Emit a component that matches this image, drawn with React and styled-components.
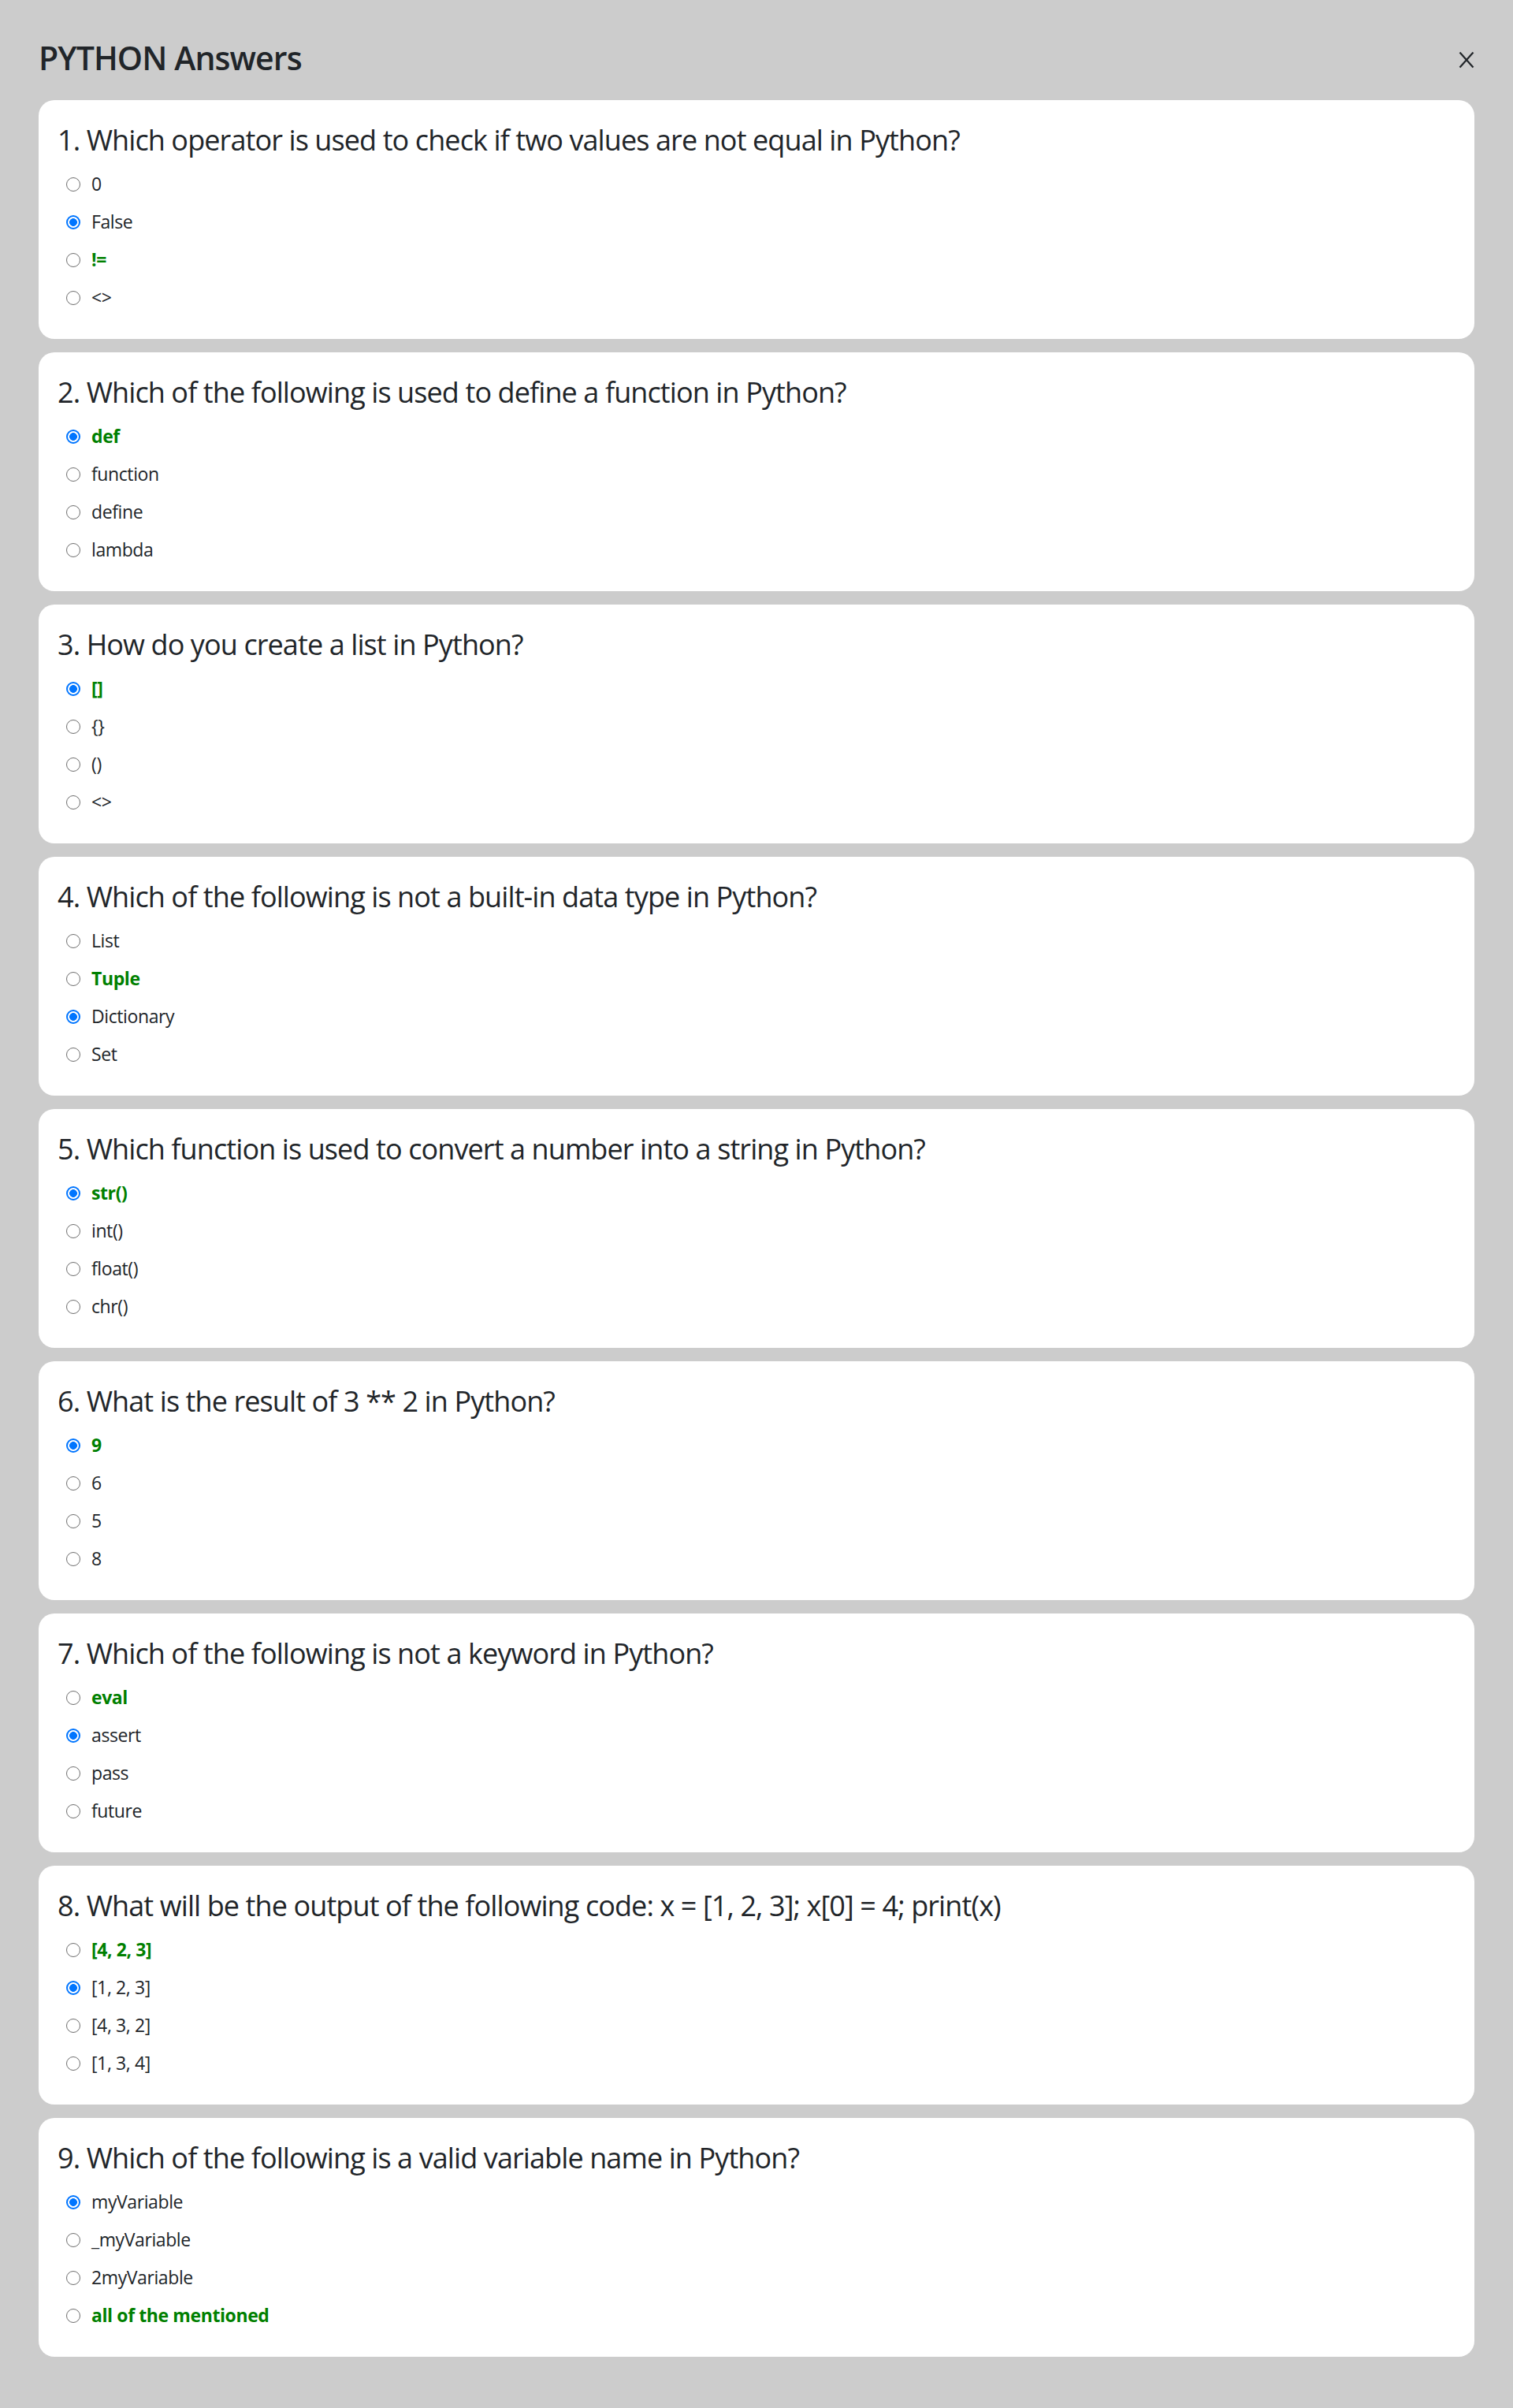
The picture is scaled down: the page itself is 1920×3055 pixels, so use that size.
import React from "react";
import styled, { createGlobalStyle } from "styled-components";

const GlobalStyle = createGlobalStyle`
  * { box-sizing: border-box; }
  html, body { margin: 0; padding: 0; }
  body {
    background: #cccccc;
    font-family: "Open Sans", "Noto Sans", Arial, sans-serif;
    color: #212529;
  }
`;

const Page = styled.div`
  min-height: 3055px;
  padding: 49px 49px 65px;
  background: #cccccc;
`;

const Header = styled.header`
  display: flex;
  align-items: center;
  justify-content: space-between;
  margin-bottom: 29px;
`;

const Title = styled.h1`
  margin: 0;
  font-size: 41px;
  line-height: 1.2;
  font-weight: 600;
  letter-spacing: -0.9px;
  color: #212529;
`;

const CloseButton = styled.button`
  display: flex;
  align-items: center;
  justify-content: center;
  width: 20px;
  height: 28px;
  padding: 0;
  margin: 4px 0 0;
  border: none;
  background: transparent;
  color: #212529;
  cursor: pointer;
`;

const List = styled.div`
  display: flex;
  flex-direction: column;
  gap: 17px;
`;

const Card = styled.section`
  background: #ffffff;
  border-radius: 20px;
  padding: 29px 24px 28px;
  height: 303px;
`;

const Question = styled.h2`
  margin: 0 0 11px;
  font-size: 36px;
  line-height: 43px;
  font-weight: 400;
  letter-spacing: -0.9px;
  color: #212529;
`;

const Options = styled.div`
  display: flex;
  flex-direction: column;
  padding-left: 11px;
`;

const OptionRow = styled.label`
  display: flex;
  align-items: center;
  gap: 14px;
  height: 48px;
`;

const Radio = styled.input.attrs({ type: "radio" })`
  appearance: none;
  -webkit-appearance: none;
  margin: 0;
  width: 18px;
  height: 18px;
  flex: none;
  border-radius: 50%;
  border: 1.8px solid #6f6f6f;
  background: #ffffff;

  &:checked {
    border: 2px solid #0075ff;
    background: radial-gradient(circle, #0075ff 0 4.6px, #ffffff 5.2px);
  }
`;

const OptionText = styled.span`
  font-size: 23px;
  line-height: 1.2;
  letter-spacing: -0.4px;
  color: ${(p) => (p.$correct ? "#008000" : "#212529")};
  font-weight: ${(p) => (p.$correct ? 700 : 400)};
`;

const questions = [
  {
    q: "1. Which operator is used to check if two values are not equal in Python?",
    options: ["0", "False", "!=", "<>"],
    selected: 1,
    correct: 2,
  },
  {
    q: "2. Which of the following is used to define a function in Python?",
    options: ["def", "function", "define", "lambda"],
    selected: 0,
    correct: 0,
  },
  {
    q: "3. How do you create a list in Python?",
    options: ["[]", "{}", "()", "<>"],
    selected: 0,
    correct: 0,
  },
  {
    q: "4. Which of the following is not a built-in data type in Python?",
    options: ["List", "Tuple", "Dictionary", "Set"],
    selected: 2,
    correct: 1,
  },
  {
    q: "5. Which function is used to convert a number into a string in Python?",
    options: ["str()", "int()", "float()", "chr()"],
    selected: 0,
    correct: 0,
  },
  {
    q: "6. What is the result of 3 ** 2 in Python?",
    options: ["9", "6", "5", "8"],
    selected: 0,
    correct: 0,
  },
  {
    q: "7. Which of the following is not a keyword in Python?",
    options: ["eval", "assert", "pass", "future"],
    selected: 1,
    correct: 0,
  },
  {
    q: "8. What will be the output of the following code: x = [1, 2, 3]; x[0] = 4; print(x)",
    options: ["[4, 2, 3]", "[1, 2, 3]", "[4, 3, 2]", "[1, 3, 4]"],
    selected: 1,
    correct: 0,
  },
  {
    q: "9. Which of the following is a valid variable name in Python?",
    options: ["myVariable", "_myVariable", "2myVariable", "all of the mentioned"],
    selected: 0,
    correct: 3,
  },
];

function CloseIcon() {
  return (
    <svg width="20" height="22" viewBox="0 0 20 22" fill="none">
      <path
        d="M1.5 1.5 L18.5 20.5 M18.5 1.5 L1.5 20.5"
        stroke="currentColor"
        strokeWidth="2.2"
        strokeLinecap="butt"
      />
    </svg>
  );
}

export default function App() {
  return (
    <>
      <GlobalStyle />
      <Page>
        <Header>
          <Title>PYTHON Answers</Title>
          <CloseButton aria-label="Close">
            <CloseIcon />
          </CloseButton>
        </Header>
        <List>
          {questions.map((item, qi) => (
            <Card key={qi}>
              <Question>{item.q}</Question>
              <Options>
                {item.options.map((opt, oi) => (
                  <OptionRow key={oi}>
                    <Radio
                      name={`q${qi}`}
                      defaultChecked={item.selected === oi}
                    />
                    <OptionText $correct={item.correct === oi}>{opt}</OptionText>
                  </OptionRow>
                ))}
              </Options>
            </Card>
          ))}
        </List>
      </Page>
    </>
  );
}
